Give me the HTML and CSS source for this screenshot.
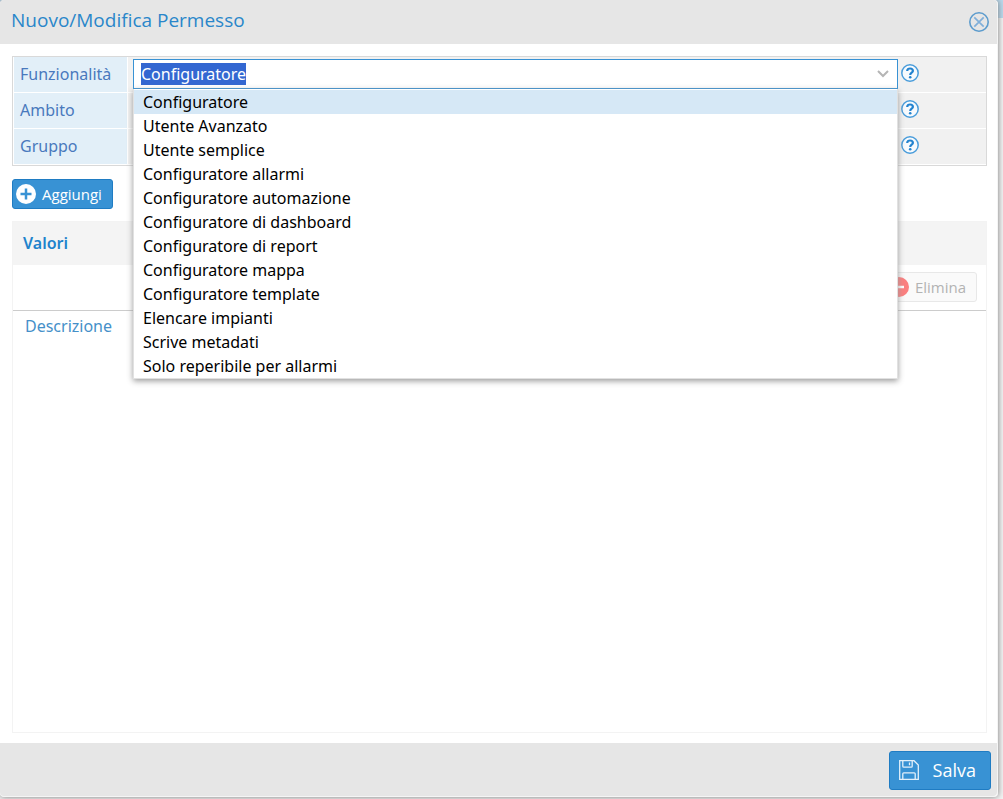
FILE: index.html
```html
<!DOCTYPE html>
<html lang="it">
<head>
<meta charset="utf-8">
<title>Nuovo/Modifica Permesso</title>
<link rel="stylesheet" href="styles.css">
</head>
<body>
<svg class="defs" aria-hidden="true">
  <symbol id="help" viewBox="0 0 18 18">
    <circle cx="9" cy="9" r="8.2" fill="#f7fafd" stroke="#4a9ddb" stroke-width="1.5"/>
    <path d="M6.2 7C6.2 5.300 7.400 4.500 9 4.500S11.900 5.400 11.900 6.900C11.900 8.700 9.200 8.700 9.200 10.900" fill="none" stroke="#2383cf" stroke-width="2.200"/>
    <circle cx="9.200" cy="13.200" r="1.300" fill="#2383cf"/>
  </symbol>
</svg>
<div class="dialog" role="dialog" aria-labelledby="title">
  <header class="dialog-header">
    <h1 id="title">Nuovo/Modifica Permesso</h1>
    <button class="close" type="button" aria-label="Chiudi">
      <svg width="20" height="20" viewBox="0 0 20 20" fill="none"><circle cx="10" cy="10" r="9.200" stroke="#5d9ccd" stroke-width="1.600"/><path d="M5.300 5.300l9.400 9.400M14.700 5.300l-9.400 9.400" stroke="#80afd9" stroke-width="1.700"/></svg>
    </button>
  </header>
  <main class="dialog-body">
    <form class="fields">
      <div class="row">
        <label for="funzionalita">Funzionalità</label>
        <div class="value">
          <div class="combo">
            <input id="funzionalita" type="text" role="combobox" aria-expanded="true" aria-controls="options" value="Configuratore" autocomplete="off">
            <svg class="chevron" width="12" height="8" viewBox="0 0 12 8" fill="none"><path d="M1 1l5 5 5-5" stroke="#b5b5b5" stroke-width="2"/></svg>
            <ul class="options" id="options" role="listbox">
              <li class="active" role="option" aria-selected="true">Configuratore</li>
              <li role="option">Utente Avanzato</li>
              <li role="option">Utente semplice</li>
              <li role="option">Configuratore allarmi</li>
              <li role="option">Configuratore automazione</li>
              <li role="option">Configuratore di dashboard</li>
              <li role="option">Configuratore di report</li>
              <li role="option">Configuratore mappa</li>
              <li role="option">Configuratore template</li>
              <li role="option">Elencare impianti</li>
              <li role="option">Scrive metadati</li>
              <li role="option">Solo reperibile per allarmi</li>
            </ul>
          </div>
          <button class="help" type="button" aria-label="Aiuto funzionalità"><svg width="18" height="18"><use href="#help"/></svg></button>
        </div>
      </div>
      <div class="row">
        <label for="ambito">Ambito</label>
        <div class="value">
          <div class="combo"><input id="ambito" type="text"></div>
          <button class="help" type="button" aria-label="Aiuto ambito"><svg width="18" height="18"><use href="#help"/></svg></button>
        </div>
      </div>
      <div class="row">
        <label for="gruppo">Gruppo</label>
        <div class="value">
          <div class="combo"><input id="gruppo" type="text"></div>
          <button class="help" type="button" aria-label="Aiuto gruppo"><svg width="18" height="18"><use href="#help"/></svg></button>
        </div>
      </div>
    </form>
    <button class="add" type="button">
      <svg width="20" height="20" viewBox="0 0 20 20"><circle cx="10" cy="10" r="10" fill="#fff"/><path d="M10 4.500v11M4.500 10h11" stroke="#3892d4" stroke-width="2.500"/></svg>
      Aggiungi
    </button>
    <section class="panel">
      <h2>Valori</h2>
      <div class="toolbar">
        <button class="delete" type="button" disabled>
          <svg width="20" height="20" viewBox="0 0 20 20"><circle cx="10" cy="10" r="10" fill="#fb7f7f"/><path d="M5 10h10" stroke="#fff" stroke-width="2.500"/></svg>
          Elimina
        </button>
      </div>
      <div class="column">Descrizione</div>
    </section>
  </main>
  <footer class="dialog-footer">
    <button class="save" type="button">
      <svg width="20" height="20" viewBox="0 0 20 20" fill="none" stroke="#e3f0fa" stroke-width="1.300"><path d="M.7.700H15L19.300 5v14.300H.7z"/><path d="M3.800.700v5.500q0 1 1 1h7.400q1 0 1-1V.700M10.500 2.500v2.700"/><path d="M3.800 19.300v-5.500q0-1 1-1h10.400q1 0 1 1v5.500"/></svg>
      Salva
    </button>
  </footer>
</div>
<script src="app.js"></script>
</body>
</html>
```

FILE: styles.css
```css
* { box-sizing: border-box; }

html { height: 100%; }

body {
  min-height: 100%;
  margin: 0;
  display: flex;
  padding: 0 5px 2px 0;
  overflow: hidden;
  font: 16px/24px "Noto Sans", "Open Sans", sans-serif;
  background: linear-gradient(#b9d8ec 0 18px, #f3f3f3 18px);
}

button, input { font: inherit; }

button {
  display: flex;
  align-items: center;
  padding: 0;
  border: 0;
  background: none;
  font-family: "Open Sans", sans-serif;
}

button svg { flex: none; }

.defs {
  position: absolute;
  width: 0;
  height: 0;
}

.dialog {
  flex: 1;
  display: flex;
  flex-direction: column;
  border-right: 1px solid #f5f5f5;
  border-bottom: 1px solid #f5f5f5;
  border-radius: 4px;
  background: #fff;
  box-shadow: 0 0 6px #777;
}

.dialog-header {
  display: flex;
  align-items: center;
  justify-content: space-between;
  height: 44px;
  padding: 0 8px 0 11px;
  border-radius: 4px 4px 0 0;
  background: #e6e6e6;
}

.dialog-header h1 {
  margin: 0 0 4px;
  color: #2a86ca;
  font-family: "Open Sans", sans-serif;
  font-size: 19px;
  font-weight: 400;
}

.dialog-body {
  flex: 1;
  display: flex;
  flex-direction: column;
  align-items: stretch;
  padding: 12px 10px 10px 12px;
}

.fields {
  border: 1px solid #d9d9d9;
  background: #f1f1f1;
}

.row {
  display: grid;
  grid-template-columns: 115px 1fr;
  height: 36px;
  border-bottom: 1px solid #fff;
}

.row label {
  padding: 5px 0 0 6px;
  border: solid #fff;
  border-width: 0 1px;
  background: #e2eff8;
  color: #4979bd;
}

.value {
  display: flex;
  align-items: flex-start;
  gap: 3px;
  padding: 2px 67px 0 5px;
}

.combo {
  position: relative;
  flex: 1;
}

.combo input {
  display: block;
  width: 100%;
  height: 30px;
  padding: 0 28px 0 7px;
  border: 1px solid #3892d4;
  outline: 0;
  background: #fff;
}

.combo input::selection {
  background: #3367d1;
  color: #fff;
}

.chevron {
  position: absolute;
  top: 11px;
  right: 9px;
}

.options {
  position: absolute;
  z-index: 2;
  top: 30px;
  left: 0;
  right: 0;
  margin: 0;
  padding: 1px 0 0;
  border: solid #e1e1e1;
  border-width: 0 1px 1px;
  list-style: none;
  color: #000;
  background: #fff;
  box-shadow: 0 2px 6px #999;
}

.options li { padding: 0 9px; }

.options .active { background: #d6e8f6; }

.help { margin-top: 5px; }

.add, .save {
  border: 1px solid #1f7cc3;
  border-radius: 3px;
  background: #3892d4;
  color: #fff;
}

.add {
  align-self: flex-start;
  gap: 6px;
  height: 30px;
  margin: 13px 0 12px;
  padding: 0 10px 0 3px;
  font-size: 15px;
}

.panel {
  flex: 1;
  border: 1px solid #f3f3f3;
}

.panel h2 {
  margin: 0;
  padding: 9px 10px 10px;
  background: #f4f4f4;
  color: #1f83cc;
  font-size: 16px;
  font-weight: 600;
}

.toolbar {
  display: flex;
  justify-content: flex-end;
  padding: 7px 9px 8px;
  border-bottom: 1px solid #ccc;
}

.delete {
  gap: 6px;
  height: 30px;
  padding: 0 10px 0 3px;
  border: 1px solid #e8e8e8;
  border-radius: 3px;
  background: #fafafa;
  color: #b3b3b3;
  font-size: 15px;
}

.column {
  padding: 3px 12px;
  color: #4590c9;
}

.dialog-footer {
  display: flex;
  justify-content: flex-end;
  padding: 8px 6px 6px;
  border-radius: 0 0 4px 4px;
  background: #e6e6e6;
}

.save {
  gap: 14px;
  height: 39px;
  padding: 0 14px 2px 9px;
  font-size: 18px;
}
```

FILE: app.js
```js
const field = document.getElementById("funzionalita");
field.focus();
field.select();
```
